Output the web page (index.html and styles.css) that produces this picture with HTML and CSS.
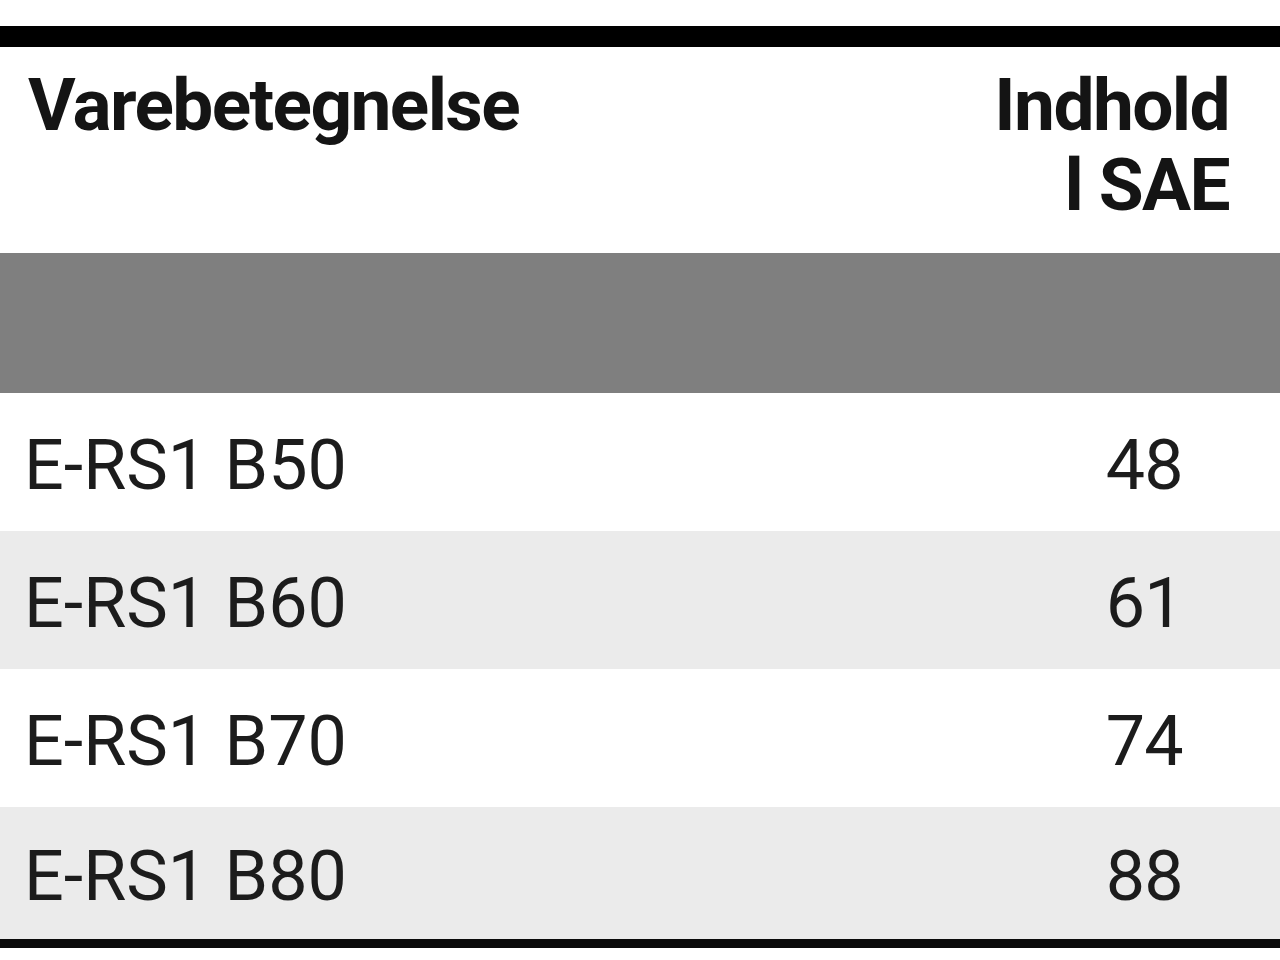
FILE: index.html
```html
<!DOCTYPE html>
<html lang="da">
<head>
<meta charset="utf-8">
<title>Varebetegnelse</title>
<link rel="stylesheet" href="styles.css">
</head>
<body>
<div class="page">
  <table class="spec">
    <thead>
      <tr class="head">
        <th class="name">Varebetegnelse</th>
        <th class="val">Indhold<br>l SAE</th>
      </tr>
    </thead>
    <tbody>
      <tr class="band"><td></td><td></td></tr>
      <tr class="row"><td class="name">E-RS1 B50</td><td class="num">48</td></tr>
      <tr class="row alt"><td class="name">E-RS1 B60</td><td class="num">61</td></tr>
      <tr class="row"><td class="name">E-RS1 B70</td><td class="num">74</td></tr>
      <tr class="row alt last"><td class="name">E-RS1 B80</td><td class="num">88</td></tr>
    </tbody>
  </table>
</div>
</body>
</html>
```
FILE: styles.css
```css
html, body {
  margin: 0;
  padding: 0;
  background: #ffffff;
}

.page {
  padding-top: 26px;
}

.spec {
  width: 1280px;
  border-collapse: separate;
  border-spacing: 0;
  font-family: Roboto, "Liberation Sans", sans-serif;
  color: #141414;
  border-top: 21px solid #000000;
  border-bottom: 9px solid #0a0a0a;
}

.spec th,
.spec td {
  padding: 0;
  vertical-align: top;
}

.head th {
  height: 206px;
  box-sizing: border-box;
  padding-top: 18px;
  font-size: 73px;
  line-height: 80px;
  font-weight: 700;
  letter-spacing: -1.6px;
}

.head .name {
  text-align: left;
  padding-left: 28px;
}

.head .val {
  text-align: right;
  padding-right: 51px;
  width: 260px;
}

.band td {
  height: 140px;
  background: #7f7f7f;
}

.row td {
  height: 138px;
  box-sizing: border-box;
  vertical-align: middle;
  font-size: 70px;
  line-height: 80px;
  font-weight: 400;
  padding-top: 6px;
  color: #1c1c1c;
}

.row.last td {
  height: 132px;
}

.row .name {
  padding-left: 24px;
}

.row .num {
  text-align: center;
  padding-left: 92px;
  padding-right: 78px;
  letter-spacing: -1px;
}

.alt td {
  background: #ebebeb;
}
```
